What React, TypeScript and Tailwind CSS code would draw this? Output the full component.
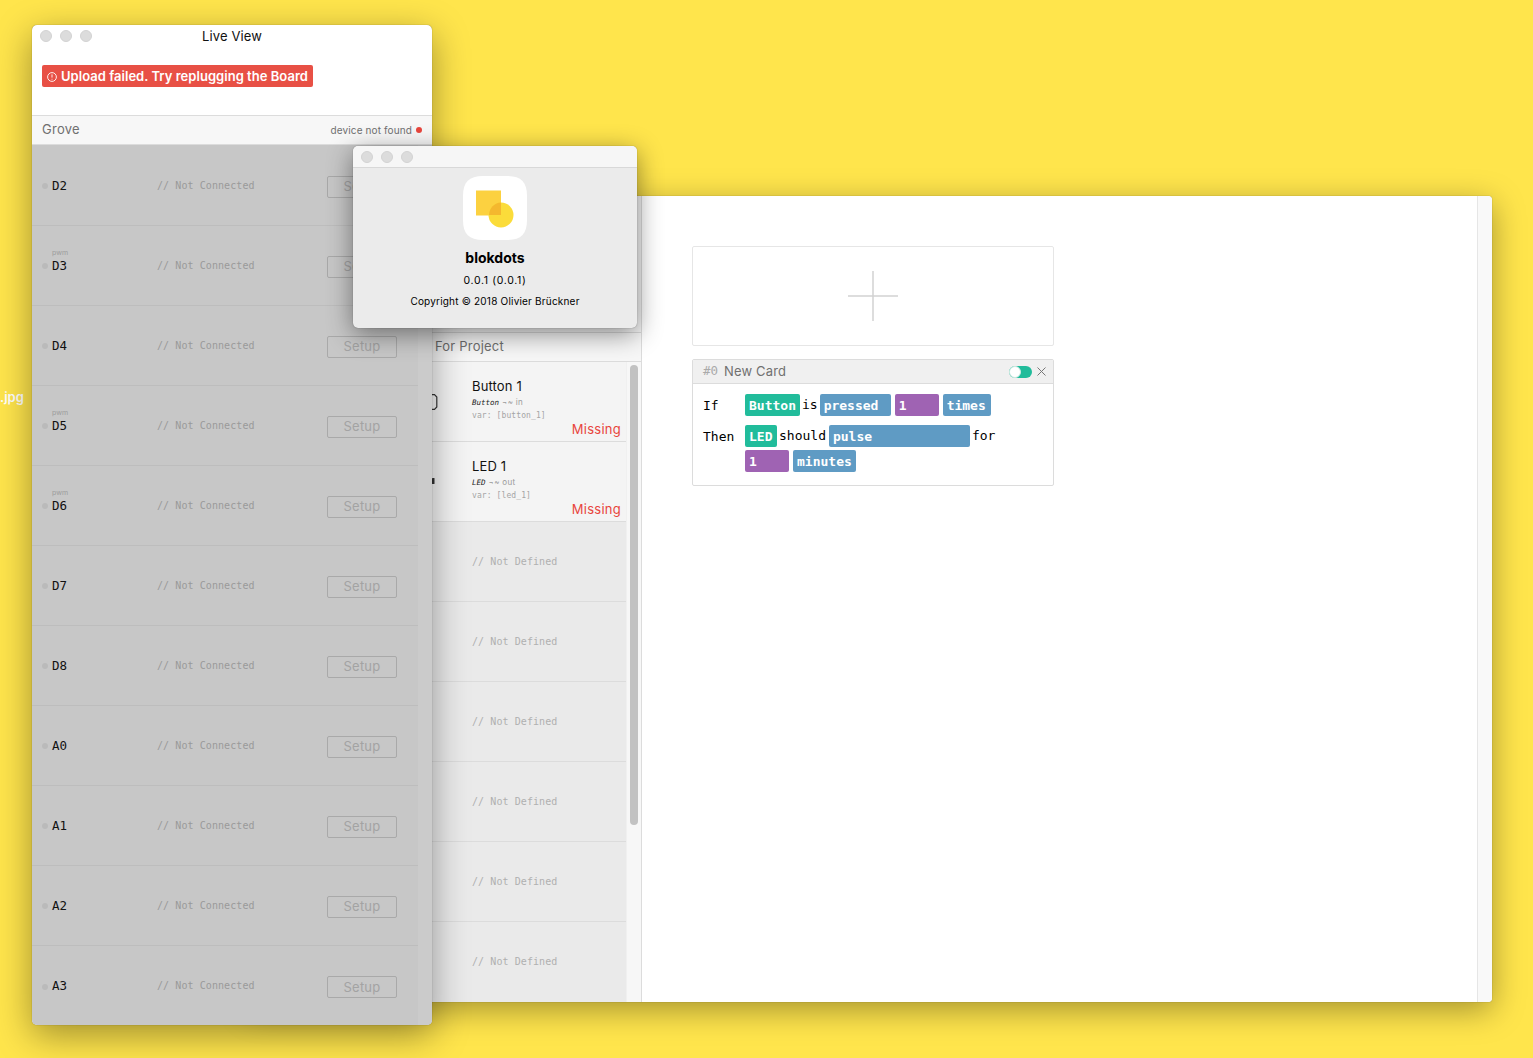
import React from "react";

const ui = "font-['Inter','Noto_Sans',sans-serif]";
const mono = "font-['DejaVu_Sans_Mono','Liberation_Mono',monospace]";

function Dots() {
  return (
    <div className="flex gap-2">
      <span className="w-3 h-3 rounded-full bg-[#dcdcdc] border border-[#d2d2d2]" />
      <span className="w-3 h-3 rounded-full bg-[#dcdcdc] border border-[#d2d2d2]" />
      <span className="w-3 h-3 rounded-full bg-[#dcdcdc] border border-[#d2d2d2]" />
    </div>
  );
}

const pins: [string, boolean][] = [
  ["D2", false], ["D3", true], ["D4", false], ["D5", true], ["D6", true], ["D7", false],
  ["D8", false], ["A0", false], ["A1", false], ["A2", false], ["A3", false],
];

function PinRow({ name, pwm, last }: { name: string; pwm: boolean; last: boolean }) {
  return (
    <div className={`h-20 flex items-center pl-[10px] pr-[21px] shrink-0 ${last ? "" : "border-b border-[#bdbdbd]"}`}>
      <span className="w-[6px] h-[6px] rounded-full bg-[#bababa] mr-1 mt-[1px]" />
      <div className="relative w-[105px]">
        {pwm && <span className={`absolute left-0 -top-[10px] text-[7px] leading-[8px] text-[#9c9c9c] ${ui}`}>pwm</span>}
        <span className={`block text-[12.500px] leading-[14px] text-[#111] ${mono}`}>{name}</span>
      </div>
      <span className={`text-[10px] leading-[12px] tracking-[0.08px] text-[#9a9a9a] flex-1 ${mono}`}>// Not Connected</span>
      <span className={`w-[70px] h-[22px] mt-[2px] pt-[1px] rounded-[2px] border border-[#a9a9a9] flex items-center justify-center text-[13px] tracking-[0.2px] text-[#a3a3a3] ${ui}`}>Setup</span>
    </div>
  );
}

function LeftWindow() {
  return (
    <div className="absolute left-[32px] top-[25px] w-[400px] h-[1000px] rounded-[5px] overflow-hidden bg-white flex flex-col shadow-[0_0_1px_rgba(0,0,0,0.5),0_10px_36px_rgba(0,0,0,0.38)] z-20">
      <div className="h-[90px] shrink-0 relative">
        <div className="absolute left-2 top-[5px]"><Dots /></div>
        <div className={`text-center text-[13px] tracking-[0.1px] leading-[22px] text-[#111] ${ui}`}>Live View</div>
        <div className={`absolute left-[10px] top-10 h-[22px] w-[271px] rounded-[2px] bg-[#e85045] text-white text-[13px] tracking-[0.03px] font-semibold flex items-center pl-[5px] gap-[4px] pt-[1px] whitespace-nowrap ${ui}`}>
          <svg width="10" height="10" viewBox="0 0 10 10" fill="none" stroke="white" strokeWidth="0.9">
            <circle cx="5" cy="5" r="4.400" />
            <path d="M5 2.400V5.600M5 6.800V7.600" />
          </svg>
          <span>Upload failed. Try replugging the Board</span>
        </div>
      </div>
      <div className="h-[30px] shrink-0 bg-[#f7f7f7] border-y border-[#dcdcdc] flex items-center justify-between pl-[10px] pr-[10px]">
        <span className={`text-[13px] tracking-[0.25px] text-[#707070] ${ui}`}>Grove</span>
        <span className={`text-[10px] tracking-[0.12px] text-[#707070] flex items-center gap-1 ${ui}`}>
          device not found
          <span className="w-[6px] h-[6px] rounded-full bg-[#e8453c]" />
        </span>
      </div>
      <div className="flex-1 min-h-0 flex bg-[#c7c7c7]">
        <div className="flex-1 min-w-0 flex flex-col pt-[1px]">
          {pins.map(([n, p], i) => <PinRow key={n} name={n} pwm={p} last={i === pins.length - 1} />)}
        </div>
        <div className="w-[14px] shrink-0 bg-[#cbcbcb]" />
      </div>
    </div>
  );
}

function AboutWindow() {
  return (
    <div className="absolute left-[353px] top-[146px] w-[284px] h-[182px] rounded-[5px] overflow-hidden bg-[#ebebeb] flex flex-col items-center shadow-[0_0_1px_rgba(0,0,0,0.5),0_6px_26px_rgba(0,0,0,0.45)] z-30">
      <div className="w-full h-[22px] shrink-0 bg-[#f6f6f6] border-b border-[#d8d8d8] flex items-center pl-2">
        <Dots />
      </div>
      <svg className="mt-2 shrink-0" width="64" height="64" viewBox="0 0 64 64">
        <path d="M20 0H44C58 0 64 6 64 20V44C64 58 58 64 44 64H20C6 64 0 58 0 44V20C0 6 6 0 20 0Z" fill="white" />
        <rect x="13" y="14.500" width="25" height="25" fill="#fcd140" />
        <circle cx="38" cy="39" r="12.500" fill="#fbdc3a" />
        <path d="M26 39A12.500 12.500 0 0 1 38 26.500V39Z" fill="#f4b82e" />
      </svg>
      <div className={`text-[14px] leading-[18px] mt-[9px] font-bold text-black ${ui}`}>blokdots</div>
      <div className={`text-[10.500px] tracking-[0.65px] leading-[14px] mt-[7px] text-black ${ui}`}>0.0.1 (0.0.1)</div>
      <div className={`text-[10px] tracking-[0.2px] leading-[14px] mt-[6px] text-black ${ui}`}>Copyright © 2018 Olivier Brückner</div>
    </div>
  );
}

function ProjectRow({ title, type, dir, v, glyph }: { title: string; type: string; dir: string; v: string; glyph: React.ReactNode }) {
  return (
    <div className="h-20 shrink-0 bg-[#f4f4f4] border-b border-[#dcdcdc] relative pl-[222px] pt-[15px]">
      <div className="absolute left-[182px] top-[32px]">{glyph}</div>
      <div className={`text-[13px] tracking-[0.15px] leading-[18px] text-[#111] ${ui}`}>{title}</div>
      <div className="flex items-center gap-[3px] leading-[13px] mt-[1px] text-[8px]">
        <span className={`italic text-[#222] text-[7.500px] ${mono}`}>{type}</span>
        <span className={`text-[#9a9a9a] tracking-[0.3px] ${ui}`}>¬~ {dir}</span>
      </div>
      <div className={`text-[8px] leading-[13px] text-[#a5a5a5] tracking-[0.1px] ${mono}`}>var: [{v}]</div>
      <div className={`absolute right-[5px] bottom-[3px] text-[13px] tracking-[0.25px] leading-[18px] text-[#e8453c] ${ui}`}>Missing</div>
    </div>
  );
}

function EmptyRow({ last }: { last?: boolean }) {
  return (
    <div className={`h-20 shrink-0 pl-[222px] pt-[33px] ${last ? "" : "border-b border-[#dcdcdc]"}`}>
      <div className={`text-[10px] leading-[14px] tracking-[0.08px] text-[#b0b0b0] ${mono}`}>// Not Defined</div>
    </div>
  );
}

function Chip({ color, w, children }: { color: string; w?: string; children: React.ReactNode }) {
  return (
    <span className={`inline-block h-[22px] rounded-[2px] px-1 text-[13px] leading-[23px] font-bold text-white ${color} ${w ?? ""} ${mono}`}>
      {children}
    </span>
  );
}

function Word({ children }: { children: React.ReactNode }) {
  return <span className={`text-[13px] leading-[22px] text-black ${mono}`}>{children}</span>;
}

function MainWindow() {
  return (
    <div className="absolute left-[250px] top-[196px] w-[1242px] h-[806px] rounded-[4px] overflow-hidden bg-white flex shadow-[0_0_1px_rgba(0,0,0,0.5),0_8px_32px_rgba(0,0,0,0.36)] z-10">
      <div className="w-[392px] shrink-0 bg-[#eaeaea] border-r border-[#dcdcdc] flex flex-col">
        <div className="h-[137px] shrink-0 border-b border-[#d8d8d8] bg-[#f4f4f4]" />
        <div className="h-[29px] shrink-0 bg-[#f7f7f7] border-b border-[#dcdcdc] flex items-center pl-[185px]">
          <span className={`text-[13px] tracking-[0.2px] text-[#707070] ${ui}`}>For Project</span>
        </div>
        <div className="flex-1 min-h-0 flex">
          <div className="w-[377px] shrink-0 flex flex-col overflow-hidden border-r border-[#f0f0f0]">
            <ProjectRow
              title="Button 1"
              type="Button"
              dir="in"
              v="button_1"
              glyph={<svg width="6" height="16" viewBox="0 0 6 16" fill="none" stroke="#333" strokeWidth="1.200"><path d="M0 0.700H2.500L4.800 3V13L2.500 15.300H0" /></svg>}
            />
            <ProjectRow
              title="LED 1"
              type="LED"
              dir="out"
              v="led_1"
              glyph={<svg width="6" height="16" viewBox="0 0 6 16" fill="#333"><rect x="0" y="4" width="2.500" height="6" rx="0.500" /></svg>}
            />
            <EmptyRow /><EmptyRow /><EmptyRow /><EmptyRow /><EmptyRow /><EmptyRow last />
          </div>
          <div className="w-[14px] shrink-0 bg-[#f7f7f7] pl-[3px] pt-[3px]">
            <div className="w-2 h-[460px] rounded-full bg-[#c2c2c2]" />
          </div>
        </div>
      </div>
      <div className="flex-1 min-w-0 pl-[50px] pt-[50px]">
        <div className="w-[362px] h-[100px] rounded-[2px] border border-[#e6e6e6] flex items-center justify-center">
          <svg width="50" height="50" viewBox="0 0 50 50" stroke="#d2d2d2" strokeWidth="1.500"><path d="M25 0V50M0 25H50" /></svg>
        </div>
        <div className="w-[362px] h-[127px] mt-[13px] rounded-[2px] border border-[#dcdcdc] overflow-hidden">
          <div className="h-6 bg-[#f0f0f0] border-b border-[#dcdcdc] flex items-center pl-[10px] pr-[7px]">
            <span className={`text-[12.500px] text-[#aaaaaa] mr-[6px] ${mono}`}>#0</span>
            <span className={`text-[13px] tracking-[0.15px] text-[#707070] flex-1 ${ui}`}>New Card</span>
            <span className="relative w-[23px] h-[12px] rounded-full bg-[#21bc9b] mr-[5px]">
              <span className="absolute left-0 top-0 w-[12px] h-[12px] rounded-full bg-white border border-[#cfe9e2]" />
            </span>
            <svg width="9" height="9" viewBox="0 0 9 9" stroke="#777" strokeWidth="1"><path d="M0.500 0.500L8.500 8.500M8.500 0.500L0.500 8.500" /></svg>
          </div>
          <div className="flex pl-[10px] pt-[10px]">
            <div className="w-[42px] shrink-0 -mt-[2px]">
              <div className="h-[22px] mb-[9px]"><Word>If</Word></div>
              <div className="h-[22px]"><Word>Then</Word></div>
            </div>
            <div className="flex flex-col">
              <div className="flex gap-[2px] h-[22px] mb-[9px]">
                <Chip color="bg-[#21bc9b]">Button</Chip>
                <Word>is</Word>
                <Chip color="bg-[#5f9bc4]" w="w-[71px]">pressed</Chip>
                <Chip color="bg-[#9f63b3]" w="w-[44px] ml-[2px]">1</Chip>
                <Chip color="bg-[#5f9bc4]" w="w-[48px] ml-[2px]">times</Chip>
              </div>
              <div className="flex gap-[2px] h-[22px] mb-[3px]">
                <Chip color="bg-[#21bc9b]" w="w-[32px]">LED</Chip>
                <Word>should</Word>
                <Chip color="bg-[#5f9bc4]" w="w-[141px] ml-[1px]">pulse</Chip>
                <Word>for</Word>
              </div>
              <div className="flex gap-1 h-[22px]">
                <Chip color="bg-[#9f63b3]" w="w-[44px]">1</Chip>
                <Chip color="bg-[#5f9bc4]">minutes</Chip>
              </div>
            </div>
          </div>
        </div>
      </div>
      <div className="w-[15px] shrink-0 bg-[#f9f9f9] border-l border-[#e6e6e6]" />
    </div>
  );
}

export default function App() {
  return (
    <div className="relative w-[1533px] h-[1058px] overflow-hidden bg-[#ffe54c]">
      <span className={`absolute left-0 top-[389px] text-[13px] leading-[16px] font-semibold text-white ${ui}`}>.jpg</span>
      <MainWindow />
      <LeftWindow />
      <AboutWindow />
    </div>
  );
}
